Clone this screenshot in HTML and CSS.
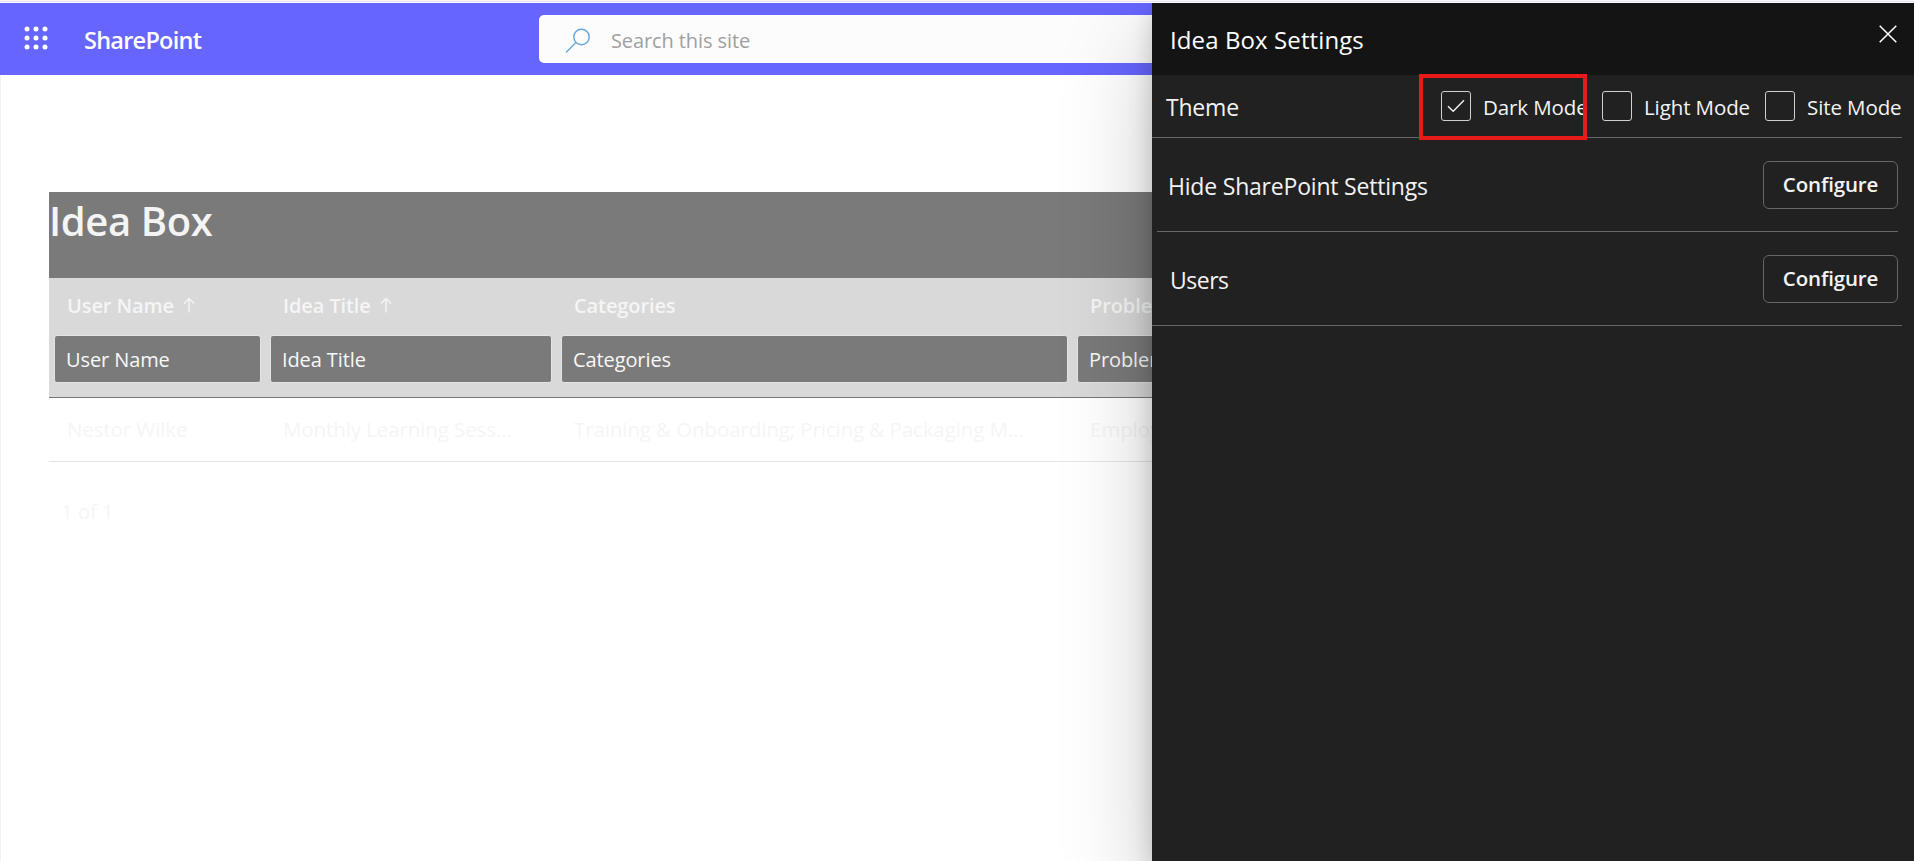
FILE: index.html
```html
<!DOCTYPE html>
<html lang="en">
<head>
<meta charset="utf-8">
<title>Idea Box</title>
<link rel="stylesheet" href="styles.css">
</head>
<body>
<div class="window-edge"></div>
<div class="app">
  <div class="site">
    <header class="suite-bar">
      <svg class="waffle" viewBox="0 0 24 24" width="24" height="24" fill="#fff">
        <circle cx="3" cy="3" r="2.5"/><circle cx="12" cy="3" r="2.5"/><circle cx="21" cy="3" r="2.5"/>
        <circle cx="3" cy="12" r="2.5"/><circle cx="12" cy="12" r="2.5"/><circle cx="21" cy="12" r="2.5"/>
        <circle cx="3" cy="21" r="2.5"/><circle cx="12" cy="21" r="2.5"/><circle cx="21" cy="21" r="2.5"/>
      </svg>
      <span class="brand">SharePoint</span>
      <div class="search">
        <svg class="search-icon" viewBox="0 0 26 26" width="26" height="26" fill="none" stroke="#69a8dc" stroke-width="1.5">
          <circle cx="16.5" cy="9" r="7.7"/><path d="M11 14.5 1 24.5"/>
        </svg>
        <span class="search-text">Search this site</span>
      </div>
    </header>
    <main class="page">
      <h1 class="title">Idea Box</h1>
      <div class="grid head">
        <div class="cell label"><span>User Name</span><svg class="arrow" viewBox="0 0 12 16" width="12" height="16"><path d="M6 15.5V1.5M1 6.5l5-5 5 5"/></svg></div>
        <div class="cell label"><span>Idea Title</span><svg class="arrow" viewBox="0 0 12 16" width="12" height="16"><path d="M6 15.5V1.5M1 6.5l5-5 5 5"/></svg></div>
        <div class="cell label">Categories</div>
        <div class="cell label">Problem</div>
        <div class="filter">User Name</div>
        <div class="filter">Idea Title</div>
        <div class="filter">Categories</div>
        <div class="filter">Problem</div>
      </div>
      <div class="grid row">
        <div class="cell">Nestor Wilke</div>
        <div class="cell">Monthly Learning Sess...</div>
        <div class="cell">Training &amp; Onboarding; Pricing &amp; Packaging M...</div>
        <div class="cell">Employ</div>
      </div>
      <div class="pager">1 of 1</div>
    </main>
  </div>
  <aside class="panel">
    <div class="panel-head">
      <span class="panel-title">Idea Box Settings</span>
      <svg class="close" viewBox="0 0 18 18" width="18" height="18" fill="none" stroke="#fff" stroke-width="1.5"><path d="M.7.7l16.6 16.6M17.3.7.7 17.3"/></svg>
    </div>
    <div class="setting theme">
      <span class="name">Theme</span>
      <div class="options">
        <div class="option dark"><span class="box"><svg viewBox="0 0 18 14" width="18" height="14" fill="none" stroke="#f3f3f3" stroke-width="1.4"><path d="M1 7.2l5.2 5L17 1.2"/></svg></span><span class="option-text">Dark Mode</span><i class="highlight"></i></div>
        <div class="option light"><span class="box"></span><span class="option-text">Light Mode</span></div>
        <div class="option site-mode"><span class="box"></span><span class="option-text">Site Mode</span></div>
      </div>
    </div>
    <div class="setting hide"><span class="name">Hide SharePoint Settings</span><button class="configure">Configure</button></div>
    <div class="setting users"><span class="name">Users</span><button class="configure">Configure</button></div>
  </aside>
</div>
</body>
</html>
```

FILE: styles.css
```css
* { box-sizing: border-box; }
body {
  margin: 0;
  height: 861px;
  overflow: hidden;
  background: #fff;
  font-family: "Segoe UI", "Open Sans", "Noto Sans", sans-serif;
  font-size: 20px;
  letter-spacing: -0.1px;
  white-space: nowrap;
}
.window-edge { height: 3px; background: #e7e2ec; border-top: 1px solid #f9f7fc; border-bottom: 1px solid #fbfaff; }
.app { display: flex; height: 858px; overflow: hidden; }
.site { width: 1152px; flex: none; overflow: hidden; }
.suite-bar { display: flex; align-items: center; height: 72px; background: #6666ff; }
.waffle { margin: 0 0 2px 24px; }
.brand { width: 455px; margin-left: 36px; padding-top: 2px; color: #fff; font-size: 23.5px; font-weight: 600; letter-spacing: -0.75px; }
.search { display: flex; align-items: center; flex: 1; height: 48px; background: #fcfcfc; border-radius: 5px 0 0 5px; color: #a0a0a0; }
.search-icon { margin: 3px 20px 0 26px; }
.search-text { padding-top: 2px; }
.page { height: 786px; padding: 117px 0 0 48px; border-left: 1px solid #f0f0f0; }
.title { margin: 0; height: 86px; background: #7a7a7a; color: #f4f4f4; font-size: 40px; line-height: 58px; font-weight: 600; letter-spacing: -0.4px; }
.grid { display: grid; grid-template-columns: 216px 291px 516px 420px; }
.head { height: 120px; grid-template-rows: 57px 48px; background: #d9d9d9; border-bottom: 1px solid #777; }
.cell { display: flex; align-items: center; padding-left: 18px; }
.label { padding-bottom: 3px; color: #f5f5f5; font-weight: 600; }
.arrow { margin-left: 9px; fill: none; stroke: #f5f5f5; stroke-width: 1.4; }
.filter { display: flex; align-items: center; margin: 0 4px 0 5px; padding: 1px 0 0 11px; background: #7a7a7a; border: 1px solid #e4e4e4; border-radius: 3px; color: #f8f8f8; }
.row { height: 64px; padding-bottom: 1px; border-bottom: 1px solid #e5e5e5; color: #f5f5f5; font-size: 20.5px; }
.pager { padding: 35px 0 0 12px; color: #f7f5f5; line-height: 28px; font-size: 20.5px; }
.panel { position: relative; flex: none; width: 762px; background: #212121; color: #f3f3f3; box-shadow: 0 38px 86px rgba(0, 0, 0, .22), 0 7px 22px rgba(0, 0, 0, .18); }
.panel-head { display: flex; justify-content: space-between; height: 72px; padding: 0 17px 0 18px; background: #141414; color: #fff; }
.panel-title { padding-top: 20px; font-size: 24px; line-height: 34px; letter-spacing: 0.1px; }
.close { margin-top: 22px; }
.setting { display: flex; align-items: center; justify-content: space-between; border-bottom: 1px solid #666; }
.name { padding-top: 2px; font-size: 23px; letter-spacing: -0.2px; }
.theme { height: 63px; margin-right: 12px; padding-left: 14px; }
.options { display: flex; align-items: center; }
.option { position: relative; display: flex; align-items: center; gap: 12px; font-size: 20.5px; }
.option-text { padding-top: 1px; }
.dark { width: 161px; }
.light { width: 163px; }
.site-mode { width: 137px; }
.box { display: flex; align-items: center; justify-content: center; width: 30px; height: 30px; flex: none; border: 1px solid #d0d0d0; border-radius: 3px; }
.highlight { position: absolute; left: -22px; top: -17px; width: 168px; height: 66px; border: 4px solid #e81a1a; }
.hide { height: 94px; margin: 0 16px 0 5px; padding-left: 11px; }
.users { height: 94px; margin-right: 12px; padding: 0 4px 0 18px; }
.users .name { letter-spacing: -0.5px; }
.configure { width: 135px; height: 48px; margin: 0; padding: 0 0 1px; border: 1px solid #666; border-radius: 6px; background: #212121; color: #f3f3f3; font: 600 20.5px "Segoe UI", "Open Sans", sans-serif; letter-spacing: -0.15px; }
```
